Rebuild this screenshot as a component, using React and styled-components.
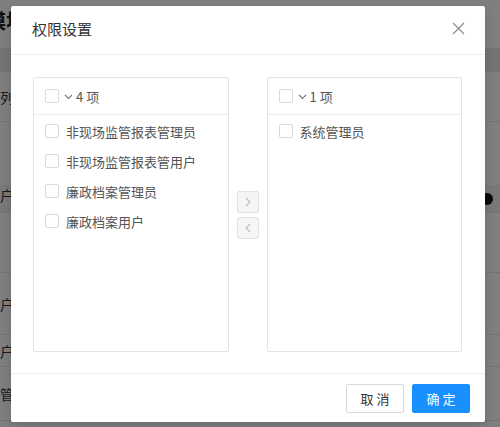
import React, { useState } from 'react';
import styled, { createGlobalStyle } from 'styled-components';

const GlobalStyle = createGlobalStyle`
  html, body {
    margin: 0;
    padding: 0;
    width: 500px;
    height: 427px;
    overflow: hidden;
    background: #ffffff;
    font-family: "Noto Sans CJK SC", "Noto Sans", sans-serif;
  }
`;

const Page = styled.div`
  width: 500px;
  height: 427px;
  position: relative;
  overflow: hidden;
  background: #ffffff;
  color: #333;
`;

const PageTitle = styled.div`
  height: 40px;
  display: flex;
  align-items: center;
  margin-left: -14px;
  font-size: 20px;
  font-weight: bold;
  color: #222;
`;

const PageRow = styled.div`
  height: ${({ h }) => h}px;
  box-sizing: border-box;
  display: flex;
  align-items: ${({ top }) => (top ? 'flex-start' : 'center')};
  justify-content: space-between;
  border-bottom: 1px solid ${({ line }) => (line ? '#e6e6e6' : 'transparent')};
  background: ${({ bg }) => bg || 'transparent'};
  font-size: 14px;
  color: #333;
`;

const PageCell = styled.span`
  margin-left: ${({ offset }) => offset}px;
  white-space: nowrap;
`;

const ClearDot = styled.span`
  width: 12px;
  height: 12px;
  border-radius: 50%;
  background: #111;
  margin-right: 7px;
  align-self: center;
`;

const Mask = styled.div`
  position: absolute;
  inset: 0;
  background: rgba(0, 0, 0, 0.5);
`;

const Modal = styled.div`
  position: absolute;
  left: 11px;
  top: 6px;
  width: 474px;
  height: 416px;
  background: #fff;
  border-radius: 2px;
  box-shadow: 0 4px 12px rgba(0, 0, 0, 0.15);
  display: flex;
  flex-direction: column;
`;

const Header = styled.div`
  height: 49px;
  box-sizing: border-box;
  padding: 0 20px 0 21px;
  display: flex;
  align-items: center;
  justify-content: space-between;
  border-bottom: 1px solid #efefef;
`;

const Title = styled.div`
  font-size: 15px;
  color: #333;
  line-height: 22px;
  padding-bottom: 2px;
`;

const Close = styled.button`
  width: 14px;
  height: 14px;
  padding: 0;
  border: none;
  background: none;
  display: flex;
  align-items: center;
  justify-content: center;
  cursor: pointer;
  margin-bottom: 4px;
`;

const Body = styled.div`
  flex: 1;
  padding: 22px 23px 21px 22px;
  display: flex;
  align-items: stretch;
`;

const List = styled.div`
  width: 196px;
  box-sizing: border-box;
  border: 1px solid #e3e3e3;
  border-radius: 2px;
  display: flex;
  flex-direction: column;
`;

const ListHeader = styled.div`
  height: 37px;
  box-sizing: border-box;
  padding-left: 11px;
  display: flex;
  align-items: center;
  border-bottom: 1px solid #ededed;
  font-size: 13px;
  color: #555;
`;

const Items = styled.div`
  padding-top: 1px;
  display: flex;
  flex-direction: column;
`;

const Item = styled.label`
  height: 30px;
  padding-left: 11px;
  display: flex;
  align-items: center;
  font-size: 13px;
  color: #555;
  cursor: pointer;
`;

const Box = styled.span`
  width: 14px;
  height: 14px;
  box-sizing: border-box;
  border: 1px solid #dadada;
  border-radius: 2px;
  background: ${({ checked }) => (checked ? '#1890ff' : '#fff')};
  margin-right: ${({ gap }) => gap}px;
  flex-shrink: 0;
`;

const Count = styled.span`
  display: flex;
  align-items: center;
  gap: 3px;
`;

const Operations = styled.div`
  width: 22px;
  margin: 0 8px;
  display: flex;
  flex-direction: column;
  justify-content: center;
  gap: 4px;
`;

const ArrowButton = styled.button`
  width: 22px;
  height: 22px;
  padding: 0;
  box-sizing: border-box;
  border: 1px solid #e2e2e2;
  border-radius: 2px;
  background: #f5f5f5;
  display: flex;
  align-items: center;
  justify-content: center;
  cursor: not-allowed;
`;

const Footer = styled.div`
  height: 49px;
  box-sizing: border-box;
  border-top: 1px solid #efefef;
  padding: 0 15px 0 0;
  display: flex;
  align-items: center;
  justify-content: flex-end;
  gap: 8px;
`;

const Button = styled.button`
  width: 58px;
  height: 29px;
  box-sizing: border-box;
  border-radius: 2px;
  border: 1px solid ${({ primary }) => (primary ? '#1890ff' : '#d9d9d9')};
  background: ${({ primary }) => (primary ? '#1890ff' : '#fff')};
  color: ${({ primary }) => (primary ? '#fff' : '#333')};
  font-family: "Noto Sans CJK SC", sans-serif;
  font-size: 13px;
  letter-spacing: 3px;
  text-indent: 3px;
  padding: 0;
  cursor: pointer;
`;

const Chevron = ({ dir }) => {
  const d = dir === 'down' ? 'M1 2 L4.5 5.5 L8 2' : dir === 'right' ? 'M3 1 L7 5 L3 9' : 'M7 1 L3 5 L7 9';
  const size = dir === 'down' ? [9, 7] : [10, 10];
  return (
    <svg width={size[0]} height={size[1]} viewBox={`0 0 ${size[0]} ${size[1]}`} fill="none">
      <path d={d} stroke={dir === 'down' ? '#777' : '#bbb'} strokeWidth="1.1" />
    </svg>
  );
};

const TransferList = ({ items }) => (
  <List>
    <ListHeader>
      <Box gap={5} />
      <Count>
        <Chevron dir="down" />
        <span>{items.length} 项</span>
      </Count>
    </ListHeader>
    <Items>
      {items.map((name) => (
        <Item key={name}>
          <Box gap={7} />
          {name}
        </Item>
      ))}
    </Items>
  </List>
);

const App = () => {
  const [source] = useState(['非现场监管报表管理员', '非现场监管报表管用户', '廉政档案管理员', '廉政档案用户']);
  const [target] = useState(['系统管理员']);

  return (
    <Page>
      <GlobalStyle />
      <PageTitle>模块</PageTitle>
      <PageRow h={8} />
      <PageRow h={24} bg="#e9e9e9" />
      <PageRow h={50} line>
        <PageCell offset={-14}>角列表</PageCell>
      </PageRow>
      <PageRow h={63} />
      <PageRow h={28} bg="#f2f2f2" line top>
        <PageCell offset={-14}>用户</PageCell>
        <ClearDot />
      </PageRow>
      <PageRow h={60} line />
      <PageRow h={62} line>
        <PageCell offset={-14}>用户</PageCell>
      </PageRow>
      <PageRow h={32} line>
        <PageCell offset={-14}>用户</PageCell>
      </PageRow>
      <PageRow h={54} line>
        <PageCell offset={-14}>监管理</PageCell>
      </PageRow>
      <Mask />
      <Modal>
        <Header>
          <Title>权限设置</Title>
          <Close aria-label="close">
            <svg width="13" height="13" viewBox="0 0 13 13" fill="none">
              <path d="M1 1 L12 12 M12 1 L1 12" stroke="#8c8c8c" strokeWidth="1.2" />
            </svg>
          </Close>
        </Header>
        <Body>
          <TransferList items={source} />
          <Operations>
            <ArrowButton disabled>
              <Chevron dir="right" />
            </ArrowButton>
            <ArrowButton disabled>
              <Chevron dir="left" />
            </ArrowButton>
          </Operations>
          <TransferList items={target} />
        </Body>
        <Footer>
          <Button>取消</Button>
          <Button primary>确定</Button>
        </Footer>
      </Modal>
    </Page>
  );
};

export default App;
